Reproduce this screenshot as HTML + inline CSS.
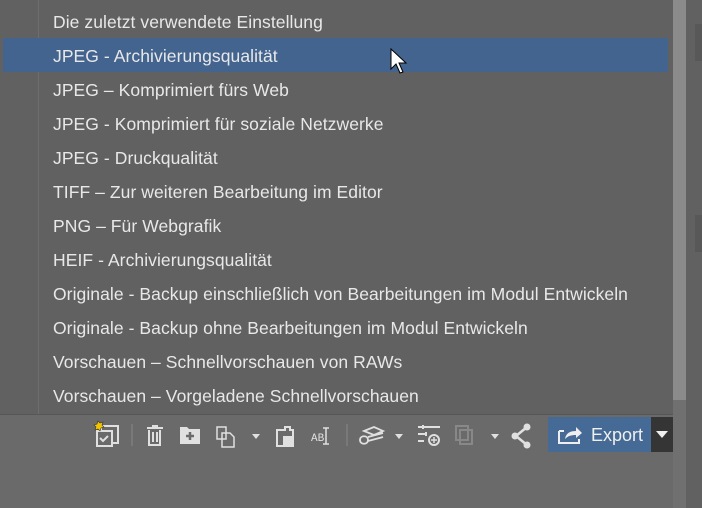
<!DOCTYPE html>
<html><head><meta charset="utf-8"><style>
body{margin:0;width:702px;height:508px;overflow:hidden;background:#6a6a6a;font-family:"Liberation Sans",sans-serif;position:relative}
.panel{position:absolute;left:0;top:0;width:673px;height:414px;background:#616161;border-bottom:1px solid #575757}
.vline{position:absolute;left:38px;top:0;width:1px;height:414px;background:#6e6e6e}
.row{position:absolute;left:53px;font-size:17.5px;color:#e8e8e8;letter-spacing:0.07px;white-space:nowrap}
.hl{position:absolute;left:3px;top:38px;width:665px;height:34px;background:#42648f}
.sb{position:absolute;left:673px;top:0;width:13px;height:400px;background:#8b8b8b}
.sb2{position:absolute;left:673px;top:400px;width:13px;height:108px;background:#707070}
.rc{position:absolute;left:686px;top:0;width:16px;height:508px;background:#616161}
.blk{position:absolute;left:695px;width:7px;height:37px;background:#585858}
.exp{position:absolute;left:548px;top:417px;width:103px;height:35px;background:#456a96;color:#f0f0f0;font-size:18px}
.dd{position:absolute;left:651px;top:417px;width:22px;height:35px;background:#353535}
svg{position:absolute}
</style></head><body>
<div class="panel"></div>
<div class="vline"></div>
<div class="hl"></div>
<div class="row" style="top:12px">Die zuletzt verwendete Einstellung</div>
<div class="row" style="top:46px">JPEG - Archivierungsqualität</div>
<div class="row" style="top:80px">JPEG – Komprimiert fürs Web</div>
<div class="row" style="top:114px">JPEG - Komprimiert für soziale Netzwerke</div>
<div class="row" style="top:148px">JPEG - Druckqualität</div>
<div class="row" style="top:182px">TIFF – Zur weiteren Bearbeitung im Editor</div>
<div class="row" style="top:216px">PNG – Für Webgrafik</div>
<div class="row" style="top:250px">HEIF - Archivierungsqualität</div>
<div class="row" style="top:284px">Originale - Backup einschließlich von Bearbeitungen im Modul Entwickeln</div>
<div class="row" style="top:318px">Originale - Backup ohne Bearbeitungen im Modul Entwickeln</div>
<div class="row" style="top:352px">Vorschauen – Schnellvorschauen von RAWs</div>
<div class="row" style="top:386px">Vorschauen – Vorgeladene Schnellvorschauen</div>
<svg style="left:390px;top:48px" width="20" height="28" viewBox="0 0 20 28"><path d="M1 1 L1 21 L6 16 L10 25 L13 24 L9 15 L16 15 Z" fill="#fff" stroke="#000" stroke-width="1"/></svg>
<div class="sb"></div><div class="sb2"></div>
<div class="rc"></div><div class="blk" style="top:24px"></div><div class="blk" style="top:215px"></div>
<svg style="left:90px;top:418px" width="450" height="34" viewBox="0 0 450 34" fill="none" stroke="#e0e0e0" stroke-width="2">
<rect x="11" y="8" width="17" height="17"/><rect x="7" y="13" width="15" height="15" fill="#6a6a6a"/><path d="M10 20l3 3 5-5"/>
<path d="M8 3l2 2 3-1-1 3 2 2-3 1-1 3-2-2-3 1 1-3-2-2 3-1z" fill="#f5c400" stroke="#333" stroke-width="0.6"/>
<line x1="42" y1="6" x2="42" y2="28" stroke="#888" stroke-width="1"/>
<path d="M57 10h16M62 8h6M59 12v15h11V12M63 14v10M67 14v10"/>
<path d="M90 9h7l2 2h11v15H90z" fill="#e0e0e0" stroke="none"/><path d="M100 14v8M96 18h8" stroke="#6a6a6a" stroke-width="2.5"/>
<path d="M127 9h9v12h-9zM132 15h8l4 4v10h-12z" stroke-width="1.5"/>
<path d="M162 16l4 5 4-5z" fill="#e0e0e0" stroke="none"/>
<path d="M187 12h8v-3h5v3h3v16h-16z" stroke-width="2"/><rect x="193" y="18" width="10" height="11" fill="#e0e0e0" stroke="none"/>
<text x="221" y="23" font-size="11" fill="#e0e0e0" stroke="none" font-family="Liberation Mono">AB</text><path d="M236 10v16M233 10h6M233 26h6" stroke-width="1.5"/>
<line x1="257" y1="6" x2="257" y2="28" stroke="#888" stroke-width="1"/>
<path d="M270 22c0-5 8-5 8 0s-8 5-8 0zM274 13l10-4 9 4-9 4zM278 19l15-4M278 23l15-4" stroke-width="1.8"/>
<path d="M305 16l4 5 4-5z" fill="#e0e0e0" stroke="none"/>
<path d="M328 9h22M328 16h8M328 23h6M333 7v4M336 14v4" stroke-width="2"/><circle cx="344" cy="22" r="5"/><path d="M344 19v6M341 22h6" stroke-width="1.5"/>
<g stroke="#888"><rect x="366" y="8" width="12" height="14"/><rect x="370" y="12" width="12" height="14"/></g>
<path d="M401 16l4 5 4-5z" fill="#e0e0e0" stroke="none"/>
<path d="M426 18l11-9M426 18l11 9" stroke-width="2.5"/>
<circle cx="437" cy="9" r="3.5" fill="#e0e0e0" stroke="none"/><circle cx="425" cy="18" r="3.5" fill="#e0e0e0" stroke="none"/><circle cx="437" cy="27" r="3.5" fill="#e0e0e0" stroke="none"/>
</svg>
<div class="exp"><svg style="left:9px;top:8px" width="28" height="20" viewBox="0 0 28 20" fill="none" stroke="#eee" stroke-width="2"><path d="M2 6v12h20v-4M2 6h5"/><path d="M8 14c1-6 5-8 11-8v-4l6 6-6 5v-3c-5 0-8 1-11 4z" fill="#eee" stroke="none"/></svg><span style="position:absolute;left:43px;top:8px">Export</span></div>
<div class="dd"><svg style="left:5px;top:14px" width="12" height="8"><path d="M0 0h12L6 7z" fill="#f0f0f0"/></svg></div>
</body></html>
